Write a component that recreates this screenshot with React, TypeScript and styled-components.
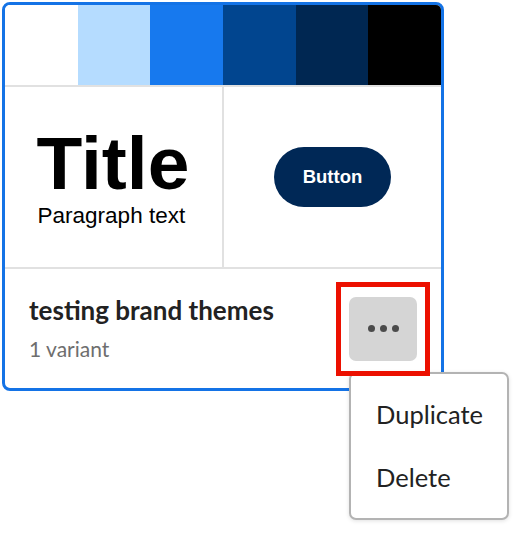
import React from "react";
import styled, { createGlobalStyle } from "styled-components";

const GlobalStyle = createGlobalStyle`
  html, body { margin: 0; padding: 0; background: #ffffff; }
  * { box-sizing: border-box; }
`;

const Stage = styled.div`
  padding: 2px;
  width: 524px;
  height: 534px;
`;

const Card = styled.div`
  position: relative;
  width: 442px;
  border: 3px solid #1473e6;
  border-radius: 8px;
  background: #ffffff;
`;

const SwatchRow = styled.div`
  display: grid;
  grid-template-columns: repeat(6, 1fr);
  height: 82px;
  border-bottom: 2px solid #e1e1e1;
  border-radius: 5px 5px 0 0;
  overflow: hidden;
`;

const Swatch = styled.div<{ $color: string }>`
  background: ${(p) => p.$color};
`;

const Preview = styled.div`
  display: grid;
  grid-template-columns: 1fr 1fr;
  column-gap: 2px;
  height: 182px;
  background: #e1e1e1;
  border-bottom: 2px solid #e1e1e1;
`;

const PreviewCell = styled.div`
  display: flex;
  align-items: center;
  justify-content: center;
  background: #ffffff;
`;

const TypeSample = styled.div`
  display: flex;
  flex-direction: column;
  gap: 4px;
  font-family: "Liberation Sans", Arial, sans-serif;
  color: #000000;
`;

const SampleTitle = styled.div`
  font-size: 75px;
  font-weight: 700;
  line-height: 1;
  margin-left: -1px;
`;

const SampleParagraph = styled.div`
  font-size: 22.5px;
  line-height: 1;
`;

const SampleButton = styled.button`
  width: 117px;
  height: 60px;
  border: none;
  border-radius: 30px;
  background: #002856;
  color: #ffffff;
  font-family: "Liberation Sans", Arial, sans-serif;
  font-weight: 700;
  font-size: 18.5px;
  padding: 0;
`;

const Footer = styled.div`
  display: flex;
  align-items: center;
  justify-content: space-between;
  height: 119px;
  padding: 0 11px 0 24px;
`;

const Info = styled.div`
  display: flex;
  flex-direction: column;
  gap: 11px;
  font-family: Lato, "Noto Sans", sans-serif;
`;

const Name = styled.div`
  font-size: 26px;
  font-weight: 700;
  color: #222222;
  line-height: 30px;
`;

const Meta = styled.div`
  font-size: 21px;
  color: #6e6e6e;
  line-height: 26px;
`;

const Highlight = styled.div`
  position: relative;
  padding: 15px 13px;
  &::after {
    content: "";
    position: absolute;
    inset: 0;
    border: 5px solid #ec1000;
    pointer-events: none;
    z-index: 3;
  }
`;

const MenuAnchor = styled.div`
  position: relative;
`;

const MoreButton = styled.button`
  display: flex;
  align-items: center;
  justify-content: center;
  gap: 5px;
  width: 68px;
  height: 64px;
  border: none;
  border-radius: 7px;
  background: #d5d5d5;
  padding: 0;
`;

const Dot = styled.span`
  width: 7px;
  height: 7px;
  border-radius: 50%;
  background: #4b4b4b;
`;

const Menu = styled.div`
  position: absolute;
  top: calc(100% + 11px);
  left: 0;
  z-index: 2;
  width: 160px;
  height: 148px;
  padding: 9px 0;
  border: 2px solid #b3b3b3;
  border-radius: 7px;
  background: #ffffff;
  box-shadow: 0 1px 4px rgba(0, 0, 0, 0.12);
  font-family: Lato, "Noto Sans", sans-serif;
`;

const MenuItem = styled.div`
  display: flex;
  align-items: center;
  height: 63px;
  padding-left: 25px;
  font-size: 25.5px;
  color: #222222;
`;

const swatches = ["#ffffff", "#b5dcff", "#1779ee", "#01458f", "#002752", "#000000"];

export default function App() {
  return (
    <Stage>
      <GlobalStyle />
      <Card>
        <SwatchRow>
          {swatches.map((c) => (
            <Swatch key={c} $color={c} />
          ))}
        </SwatchRow>
        <Preview>
          <PreviewCell>
            <TypeSample>
              <SampleTitle>Title</SampleTitle>
              <SampleParagraph>Paragraph text</SampleParagraph>
            </TypeSample>
          </PreviewCell>
          <PreviewCell>
            <SampleButton>Button</SampleButton>
          </PreviewCell>
        </Preview>
        <Footer>
          <Info>
            <Name>testing brand themes</Name>
            <Meta>1 variant</Meta>
          </Info>
          <Highlight>
            <MenuAnchor>
              <MoreButton aria-label="More actions">
                <Dot />
                <Dot />
                <Dot />
              </MoreButton>
              <Menu>
                <MenuItem>Duplicate</MenuItem>
                <MenuItem>Delete</MenuItem>
              </Menu>
            </MenuAnchor>
          </Highlight>
        </Footer>
      </Card>
    </Stage>
  );
}
